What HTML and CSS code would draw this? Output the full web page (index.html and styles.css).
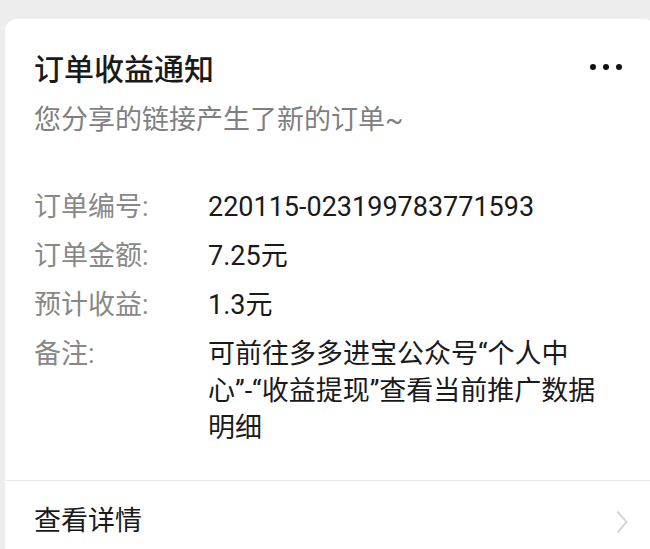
FILE: index.html
```html
<!DOCTYPE html>
<html lang="zh-CN">
<head>
  <meta charset="UTF-8" />
  <meta name="viewport" content="width=device-width, initial-scale=1.0"/>
  <title>订单收益通知</title>
  <link rel="stylesheet" href="styles.css">
</head>
<body>
  <div class="card">
    <div class="card-body">
      <div class="head">
        <h1 class="title">订单收益通知</h1>
        <span class="more"><i></i><i></i><i></i></span>
      </div>
      <p class="desc">您分享的链接产生了新的订单~</p>

      <div class="rows">
        <div class="row">
          <span class="label">订单编号:</span>
          <span class="value">220115-023199783771593</span>
        </div>
        <div class="row">
          <span class="label">订单金额:</span>
          <span class="value">7.25元</span>
        </div>
        <div class="row">
          <span class="label">预计收益:</span>
          <span class="value">1.3元</span>
        </div>
        <div class="row">
          <span class="label">备注:</span>
          <span class="value note">可前往多多进宝公众号“个人中<br>心”-“收益提现”查看当前推广数据<br>明细</span>
        </div>
      </div>
    </div>

    <a class="detail" href="#">
      <span>查看详情</span>
      <svg class="arrow" width="12" height="24" viewBox="0 0 12 24">
        <path d="M1.5 1.5 L10.5 12 L1.5 22.5" fill="none" stroke="#d6d6d6" stroke-width="2"/>
      </svg>
    </a>
  </div>
</body>
</html>
```

FILE: styles.css
```css
* {
  margin: 0;
  padding: 0;
  box-sizing: border-box;
}

body {
  background: #ededed;
  font-family: Roboto, "Noto Sans CJK SC", sans-serif;
  color: #1a1a1a;
  overflow: hidden;
}

.card {
  background: #fff;
  width: 651px;
  height: 540px;
  margin: 19px 0 0 5px;
  border-radius: 12px 12px 0 0;
}

.card-body {
  padding: 31px 28px 33px 29px;
  border-bottom: 1px solid #ebebeb;
}

.head {
  display: flex;
  align-items: center;
  justify-content: space-between;
  height: 40px;
}

.title {
  font-size: 30px;
  font-weight: 500;
  line-height: 40px;
}

.more {
  display: flex;
  gap: 7px;
  margin-right: 6px;
  margin-top: -6px;
}

.more i {
  width: 6px;
  height: 6px;
  border-radius: 50%;
  background: #111;
}

.desc {
  margin-top: 11px;
  font-size: 27px;
  line-height: 38px;
  color: #7f7f7f;
}

.rows {
  margin-top: 50px;
  display: flex;
  flex-direction: column;
  gap: 12px;
}

.row {
  display: flex;
  font-size: 27px;
  line-height: 37px;
}

.label {
  width: 174px;
  flex-shrink: 0;
  color: #888;
}

.value {
  color: #1a1a1a;
}

.detail {
  display: flex;
  align-items: center;
  justify-content: space-between;
  padding: 22px 28px 0 29px;
  font-size: 27px;
  line-height: 37px;
  color: #1a1a1a;
  text-decoration: none;
}
```
